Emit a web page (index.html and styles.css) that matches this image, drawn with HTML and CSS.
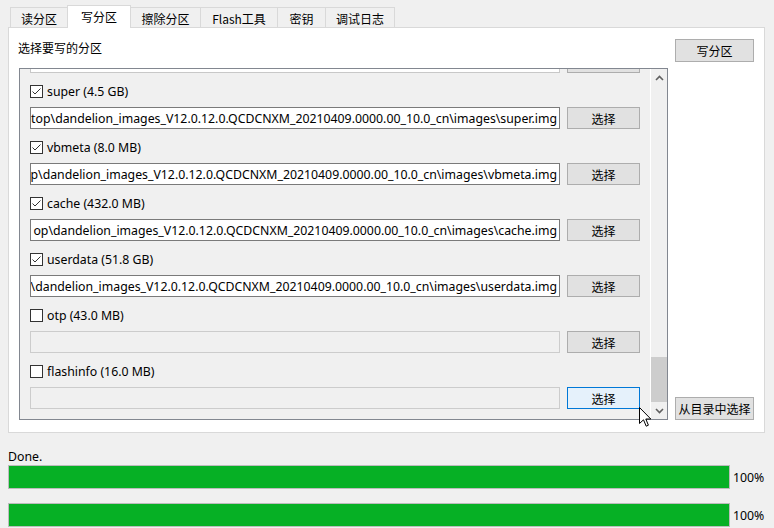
FILE: index.html
```html
<!DOCTYPE html>
<html lang="zh-CN">
<head>
<meta charset="utf-8">
<title>写分区</title>
<link rel="stylesheet" href="styles.css">
</head>
<body>
<div class="window">
  <div class="tabs">
    <div class="tab t1">读分区</div>
    <div class="tab t2 active">写分区</div>
    <div class="tab t3">擦除分区</div>
    <div class="tab t4">Flash工具</div>
    <div class="tab t5">密钥</div>
    <div class="tab t6">调试日志</div>
  </div>
  <div class="panel">
    <div class="main">
      <div class="label">选择要写的分区</div>
      <div class="scrollbox">
        <div class="viewport">
          <div class="list">
            <div class="item">
              <div class="check-row"></div>
              <div class="input-row"><div class="textbox light"></div><div class="btn"></div></div>
            </div>
            <div class="item">
              <div class="check-row"><svg class="cb" viewBox="0 0 13 13" width="13" height="13"><rect x="0.5" y="0.5" width="12" height="12" fill="#fff" stroke="#333"/><polyline points="2.5,6.5 5,9 10.5,3.5" fill="none" stroke="#333" stroke-width="1"/></svg><span>super (4.5 GB)</span></div>
              <div class="input-row"><div class="textbox"><span>top\dandelion_images_V12.0.12.0.QCDCNXM_20210409.0000.00_10.0_cn\images\super.img</span></div><button class="btn">选择</button></div>
            </div>
            <div class="item">
              <div class="check-row"><svg class="cb" viewBox="0 0 13 13" width="13" height="13"><rect x="0.5" y="0.5" width="12" height="12" fill="#fff" stroke="#333"/><polyline points="2.5,6.5 5,9 10.5,3.5" fill="none" stroke="#333" stroke-width="1"/></svg><span>vbmeta (8.0 MB)</span></div>
              <div class="input-row"><div class="textbox"><span>p\dandelion_images_V12.0.12.0.QCDCNXM_20210409.0000.00_10.0_cn\images\vbmeta.img</span></div><button class="btn">选择</button></div>
            </div>
            <div class="item">
              <div class="check-row"><svg class="cb" viewBox="0 0 13 13" width="13" height="13"><rect x="0.5" y="0.5" width="12" height="12" fill="#fff" stroke="#333"/><polyline points="2.5,6.5 5,9 10.5,3.5" fill="none" stroke="#333" stroke-width="1"/></svg><span>cache (432.0 MB)</span></div>
              <div class="input-row"><div class="textbox"><span>op\dandelion_images_V12.0.12.0.QCDCNXM_20210409.0000.00_10.0_cn\images\cache.img</span></div><button class="btn">选择</button></div>
            </div>
            <div class="item">
              <div class="check-row"><svg class="cb" viewBox="0 0 13 13" width="13" height="13"><rect x="0.5" y="0.5" width="12" height="12" fill="#fff" stroke="#333"/><polyline points="2.5,6.5 5,9 10.5,3.5" fill="none" stroke="#333" stroke-width="1"/></svg><span>userdata (51.8 GB)</span></div>
              <div class="input-row"><div class="textbox"><span>\dandelion_images_V12.0.12.0.QCDCNXM_20210409.0000.00_10.0_cn\images\userdata.img</span></div><button class="btn">选择</button></div>
            </div>
            <div class="item">
              <div class="check-row"><svg class="cb" viewBox="0 0 13 13" width="13" height="13"><rect x="0.5" y="0.5" width="12" height="12" fill="#fff" stroke="#333"/></svg><span>otp (43.0 MB)</span></div>
              <div class="input-row"><div class="textbox empty"></div><button class="btn">选择</button></div>
            </div>
            <div class="item">
              <div class="check-row"><svg class="cb" viewBox="0 0 13 13" width="13" height="13"><rect x="0.5" y="0.5" width="12" height="12" fill="#fff" stroke="#333"/></svg><span>flashinfo (16.0 MB)</span></div>
              <div class="input-row"><div class="textbox empty"></div><button class="btn hover">选择</button></div>
            </div>
          </div>
        </div>
        <div class="vscroll">
          <div class="arrow"><svg width="9" height="6" viewBox="0 0 9 6"><polyline points="1,5 4.5,1.5 8,5" fill="none" stroke="#606060" stroke-width="1.6"/></svg></div>
          <div class="track"><div class="thumb"></div></div>
          <div class="arrow"><svg width="9" height="6" viewBox="0 0 9 6"><polyline points="1,1 4.5,4.5 8,1" fill="none" stroke="#606060" stroke-width="1.6"/></svg></div>
        </div>
      </div>
    </div>
    <div class="side">
      <button class="sbtn">写分区</button>
      <button class="sbtn">从目录中选择</button>
    </div>
  </div>
  <div class="status">Done.</div>
  <div class="prog"><div class="bar"><div class="fill"></div></div><span class="pct">100%</span></div>
  <div class="prog"><div class="bar"><div class="fill"></div></div><span class="pct">100%</span></div>
</div>
<svg class="cursor" width="13" height="21" viewBox="0 0 13 21"><path d="M0.5,0.5 L0.5,16.5 L4.5,12.8 L7.2,19.2 L9.4,18.2 L6.8,12 L11.8,12 Z" fill="#fff" stroke="#000" stroke-width="1" stroke-linejoin="miter"/></svg>
</body>
</html>
```
FILE: styles.css
```css
* { box-sizing: border-box; }
html, body { margin: 0; padding: 0; }
body {
  background: #f0f0f0;
  font-family: "Noto Sans", "Noto Sans CJK SC", sans-serif;
  font-size: 12.3px;
  color: #000;
  width: 774px;
  height: 528px;
  overflow: hidden;
  position: relative;
}
.window { padding-left: 8px; }

.tabs {
  display: flex;
  align-items: flex-start;
  height: 28px;
  padding-top: 5px;
  margin-left: 2px;
  position: relative;
  z-index: 1;
}
.tab {
  height: 20px;
  margin-top: 2px;
  margin-left: -1px;
  border: 1px solid #d9d9d9;
  border-bottom: none;
  background: #f0f0f0;
  display: flex;
  align-items: center;
  justify-content: center;
  padding-top: 1px;
  font-family: "Noto Sans CJK SC", sans-serif;
  font-size: 12px;
}
.tab.t1 { margin-left: 0; width: 58px; }
.tab.t2 { width: 64px; }
.tab.t3 { width: 71px; }
.tab.t4 { width: 78px; }
.tab.t5 { width: 49px; }
.tab.t6 { width: 70px; }
.tab.active {
  height: 23px;
  margin-top: 0;
  padding-top: 0;
  padding-bottom: 1px;
  background: #fff;
  position: relative;
  z-index: 2;
}

.panel {
  width: 757px;
  height: 406px;
  margin-top: -1px;
  background: #fff;
  border: 1px solid #d9d9d9;
  display: flex;
  gap: 7px;
  padding: 11px 10px 12px 10px;
}
.main { width: 649px; display: flex; flex-direction: column; }
.label {
  height: 29px;
  line-height: 17px;
  margin-left: -1px;
  font-family: "Noto Sans CJK SC", sans-serif;
  font-size: 12px;
}
.scrollbox {
  height: 352px;
  border: 1px solid #828790;
  background: #f0f0f0;
  display: flex;
}
.viewport { flex: 1; overflow: hidden; }
.list { margin-top: -44px; }
.item { padding-left: 10px; padding-bottom: 8px; }
.check-row {
  height: 20px;
  display: flex;
  align-items: center;
  gap: 4px;
}
.cb { width: 13px; height: 13px; display: block; flex: none; }
.input-row { margin-top: 6px; height: 22px; display: flex; }
.textbox {
  width: 530px;
  height: 22px;
  border: 1px solid #7a7a7a;
  background: #fff;
  overflow: hidden;
  display: flex;
  align-items: center;
  justify-content: flex-end;
  padding: 0 2px 0 1px;
  white-space: nowrap;
}
.textbox span { flex: none; }
.textbox.light { border-color: #c8c8c8; }
.textbox.empty { background: #f0f0f0; border-color: #cccccc; }
.btn {
  width: 73px;
  height: 22px;
  margin-left: 7px;
  border: 1px solid #adadad;
  background: #e1e1e1;
  font: inherit;
  font-family: "Noto Sans CJK SC", sans-serif;
  font-size: 12px;
  color: #000;
  padding: 0;
  display: flex;
  align-items: center;
  justify-content: center;
}
.btn.hover { background: #e5f1fb; border-color: #0078d7; }

.vscroll {
  width: 17px;
  border-left: 1px solid #fff;
  display: flex;
  flex-direction: column;
}
.arrow {
  height: 17px;
  display: flex;
  align-items: center;
  justify-content: center;
}
.track { flex: 1; display: flex; flex-direction: column; justify-content: flex-end; }
.thumb { height: 45px; background: #cdcdcd; }

.side {
  width: 79px;
  display: flex;
  flex-direction: column;
  justify-content: space-between;
}
.sbtn {
  height: 23px;
  border: 1px solid #adadad;
  background: #e1e1e1;
  font: inherit;
  font-family: "Noto Sans CJK SC", sans-serif;
  font-size: 12px;
  color: #000;
  padding: 0;
  white-space: nowrap;
}

.status { margin-top: 16px; height: 16px; line-height: 16px; }
.prog { display: flex; align-items: center; height: 24px; }
.prog + .prog { margin-top: 14px; }
.bar {
  width: 722px;
  height: 24px;
  border: 1px solid #bcbcbc;
  background: #e6e6e6;
}
.fill { width: 100%; height: 100%; background: #06b025; }
.pct { margin-left: 3px; }

.cursor { position: absolute; left: 639px; top: 407px; }
```
